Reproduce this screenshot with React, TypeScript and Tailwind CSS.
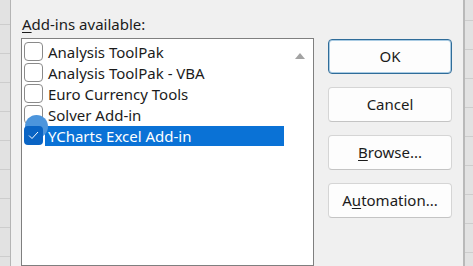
import React from "react";

const ITEMS = [
  "Analysis ToolPak",
  "Analysis ToolPak - VBA",
  "Euro Currency Tools",
  "Solver Add-in",
];

function GridStrip({ first }: { first: number }) {
  return (
    <div className="flex h-full flex-col bg-[#e2e2e2]">
      <div className="shrink-0 border-b border-[#cdcdcd]" style={{ height: first }} />
      {Array.from({ length: 9 }).map((_, i) => (
        <div key={i} className="h-[29px] shrink-0 border-b border-[#cdcdcd]" />
      ))}
    </div>
  );
}

function Box() {
  return <span className="block h-[19px] w-[19px] shrink-0 rounded-[4px] border border-[#8a8a8a] bg-white" />;
}

function Btn({ children, primary }: { children: React.ReactNode; primary?: boolean }) {
  return (
    <button
      className={
        "flex h-[35px] w-[124px] items-center justify-center rounded-[4px] bg-[#fdfdfd] text-[15px] text-[#1b1b1b] " +
        (primary ? "border border-[#2f6c99] shadow-[inset_0_0_0_1px_#a9cbe3]" : "border border-[#d5d5d5] border-b-[#c4c4c4]")
      }
    >
      {children}
    </button>
  );
}

export default function App() {
  return (
    <div
      className="flex h-[266px] w-[473px] overflow-hidden bg-[#f0f0f0]"
      style={{ fontFamily: '"Noto Sans", "Open Sans", sans-serif' }}
    >
      <div className="w-[10px] shrink-0">
        <GridStrip first={25} />
      </div>
      <div className="w-px shrink-0 bg-[#b4b4b4]" />

      <div className="flex flex-1 bg-[#f0f0f0]">
        <div className="flex w-[303px] flex-col pl-[10px] pt-[14px]">
          <div className="ml-[1px] h-[24px] text-[15px] leading-[20px] text-[#1b1b1b]">
            <span className="underline underline-offset-2">A</span>dd-ins available:
          </div>
          <div className="flex flex-1 border border-[#7f7f7f] bg-white">
            <div className="flex flex-1 flex-col pt-[2px] pl-[2px]">
              {ITEMS.map((t) => (
                <div key={t} className="flex h-[21px] items-center">
                  <Box />
                  <span className="ml-[5px] text-[15px] leading-[20px] text-[#1b1b1b]">{t}</span>
                </div>
              ))}
              <div className="relative flex h-[21px] items-center">
                <span className="absolute left-[1px] top-[-10px] h-[23px] w-[23px] rounded-full bg-[#4c95dc]" />
                <span className="relative flex h-[19px] w-[19px] shrink-0 items-center justify-center rounded-[4px] bg-[#0a64c4]">
                  <svg width="11" height="9" viewBox="0 0 11 9">
                    <path d="M1 4.5 L4 7.5 L10 1" fill="none" stroke="#ffffff" strokeWidth="1" />
                  </svg>
                </span>
                <span className="ml-[2px] flex h-[20px] w-[239px] items-center bg-[#0a72d6] pl-[3px] text-[15px] leading-[20px] text-white">
                  YCharts Excel Add-in
                </span>
              </div>
            </div>
            <div className="flex w-[26px] shrink-0 justify-center pt-[14px]">
              <svg width="10" height="6" viewBox="0 0 10 6">
                <path d="M5 0 L10 6 L0 6 Z" fill="#a3a3a3" />
              </svg>
            </div>
          </div>
        </div>

        <div className="ml-[14px] flex flex-col gap-[13px] pt-[39px]">
          <Btn primary>OK</Btn>
          <Btn>Cancel</Btn>
          <Btn>
            <span className="underline underline-offset-2">B</span>rowse...
          </Btn>
          <Btn>
            A<span className="underline underline-offset-2">u</span>tomation...
          </Btn>
        </div>
      </div>

      <div className="w-[2px] shrink-0 bg-[#b9b9b9]" />
      <div className="w-[8px] shrink-0">
        <GridStrip first={21} />
      </div>
    </div>
  );
}
